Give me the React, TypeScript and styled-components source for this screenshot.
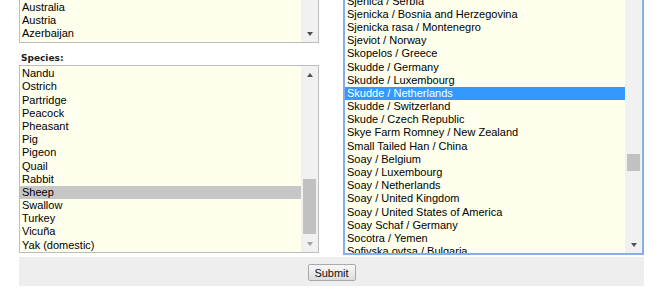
import React from 'react'
import styled, { createGlobalStyle, css } from 'styled-components'

const ROW = 13.2

const GlobalStyle = createGlobalStyle`
  html, body {
    margin: 0;
    padding: 0;
    background: #ffffff;
  }
  body {
    font-family: 'Liberation Sans', Arial, sans-serif;
    color: #000;
  }
`

const countries = ['Australia', 'Austria', 'Azerbaijan']

const species = [
  'Nandu',
  'Ostrich',
  'Partridge',
  'Peacock',
  'Pheasant',
  'Pig',
  'Pigeon',
  'Quail',
  'Rabbit',
  'Sheep',
  'Swallow',
  'Turkey',
  'Vicuña',
  'Yak (domestic)',
]

const breeds = [
  'Sjenica / Serbia',
  'Sjenicka / Bosnia and Herzegovina',
  'Sjenicka rasa / Montenegro',
  'Sjeviot / Norway',
  'Skopelos / Greece',
  'Skudde / Germany',
  'Skudde / Luxembourg',
  'Skudde / Netherlands',
  'Skudde / Switzerland',
  'Skude / Czech Republic',
  'Skye Farm Romney / New Zealand',
  'Small Tailed Han / China',
  'Soay / Belgium',
  'Soay / Luxembourg',
  'Soay / Netherlands',
  'Soay / United Kingdom',
  'Soay / United States of America',
  'Soay Schaf / Germany',
  'Socotra / Yemen',
  'Sofiyska ovtsa / Bulgaria',
]

type ArrowState = 'on' | 'off'

interface ScrollInfo {
  up?: ArrowState
  down?: ArrowState
  thumbTop?: number
  thumbHeight?: number
}

interface ListBoxProps {
  items: string[]
  selected?: string
  focused?: boolean
  // scroll position of the first rendered row, in px
  offset: number
  height: number
  scroll: ScrollInfo
}

const ListBox = ({ items, selected, focused, offset, height, scroll }: ListBoxProps) => (
  <Box $focused={focused} $height={height}>
    <Viewport>
      <Options $offset={offset}>
        {items.map((item) => (
          <Option key={item} $selected={item === selected ? (focused ? 'active' : 'inactive') : undefined}>
            {item}
          </Option>
        ))}
      </Options>
    </Viewport>
    <Scrollbar>
      {scroll.up && (
        <ArrowButton>
          <Arrow $dir='up' $state={scroll.up} />
        </ArrowButton>
      )}
      <Track>{scroll.thumbHeight && <Thumb $top={scroll.thumbTop || 0} $height={scroll.thumbHeight} />}</Track>
      {scroll.down && (
        <ArrowButton>
          <Arrow $dir='down' $state={scroll.down} />
        </ArrowButton>
      )}
    </Scrollbar>
  </Box>
)

const App = () => {
  return (
    <>
      <GlobalStyle />
      <Page>
        <Columns>
          <Column>
            <ListBox items={countries} offset={-0.6} height={43} scroll={{ down: 'on' }} />
            <Label>Species:</Label>
            <ListBox
              items={species}
              selected='Sheep'
              offset={-1.2}
              height={188}
              scroll={{ up: 'on', down: 'off', thumbTop: 96, thumbHeight: 55 }}
            />
          </Column>
          <Column>
            <ListBox
              items={breeds}
              selected='Skudde / Netherlands'
              focused
              offset={5.4}
              height={255}
              scroll={{ down: 'on', thumbTop: 154, thumbHeight: 17 }}
            />
          </Column>
        </Columns>
        <ButtonBar>
          <SubmitButton type='button'>Submit</SubmitButton>
        </ButtonBar>
      </Page>
    </>
  )
}

const Page = styled.div`
  padding-left: 19px;
  width: 625px;
`

const Columns = styled.div`
  display: grid;
  grid-template-columns: 300px 301px;
  column-gap: 24px;
  align-items: start;
`

const Column = styled.div`
  display: flex;
  flex-direction: column;
`

const Box = styled.div<{ $focused?: boolean; $height: number }>`
  display: flex;
  box-sizing: border-box;
  height: ${({ $height }) => $height}px;
  background: #ffffee;
  ${({ $focused }) =>
    $focused
      ? css`
          border: 2px solid #86aeec;
          border-top: none;
        `
      : css`
          border: 1px solid #bdbdbd;
        `}
  &:first-child {
    border-top: none;
  }
`

const Viewport = styled.div`
  flex: 1;
  overflow: hidden;
  min-width: 0;
`

const Options = styled.div<{ $offset: number }>`
  margin-top: ${({ $offset }) => -$offset}px;
`

const Option = styled.div<{ $selected?: 'active' | 'inactive' }>`
  height: ${ROW}px;
  line-height: ${ROW}px;
  padding: 0 2px;
  font-size: 11px;
  white-space: nowrap;
  color: #000;
  ${({ $selected }) =>
    $selected === 'active' &&
    css`
      background: #3399ff;
      color: #fff;
    `}
  ${({ $selected }) =>
    $selected === 'inactive' &&
    css`
      background: #c6c6c6;
    `}
`

const Scrollbar = styled.div`
  width: 17px;
  flex: none;
  display: flex;
  flex-direction: column;
  background: #f1f1f1;
`

const ArrowButton = styled.div`
  height: 17px;
  flex: none;
  display: flex;
  align-items: center;
  justify-content: center;
`

const Arrow = styled.div<{ $dir: 'up' | 'down'; $state: ArrowState }>`
  width: 0;
  height: 0;
  border-left: 3.5px solid transparent;
  border-right: 3.5px solid transparent;
  ${({ $dir, $state }) => {
    const color = $state === 'on' ? '#505050' : '#a3a3a3'
    return $dir === 'up' ? `border-bottom: 4px solid ${color};` : `border-top: 4px solid ${color};`
  }}
`

const Track = styled.div`
  flex: 1;
  overflow: hidden;
`

const Thumb = styled.div<{ $top: number; $height: number }>`
  margin: ${({ $top }) => $top}px 2px 0;
  height: ${({ $height }) => $height}px;
  background: #c1c1c1;
`

const Label = styled.div`
  margin: 9px 0 1px;
  padding-left: 2px;
  height: 12px;
  line-height: 12px;
  font-family: 'DejaVu Sans', Verdana, sans-serif;
  font-size: 9px;
  font-weight: bold;
  color: #222;
`

const ButtonBar = styled.div`
  margin-top: 2px;
  height: 29px;
  box-sizing: border-box;
  padding-top: 7px;
  display: flex;
  justify-content: center;
  align-items: flex-start;
  background: #eeeeee;
`

const SubmitButton = styled.button`
  width: 48px;
  height: 17px;
  padding: 0;
  box-sizing: border-box;
  font-family: 'Liberation Sans', Arial, sans-serif;
  font-size: 11px;
  color: #111;
  border: 1px solid #a9a9a9;
  border-radius: 2px;
  background: linear-gradient(#f9f9f9, #dcdcdc);
`

export default App
